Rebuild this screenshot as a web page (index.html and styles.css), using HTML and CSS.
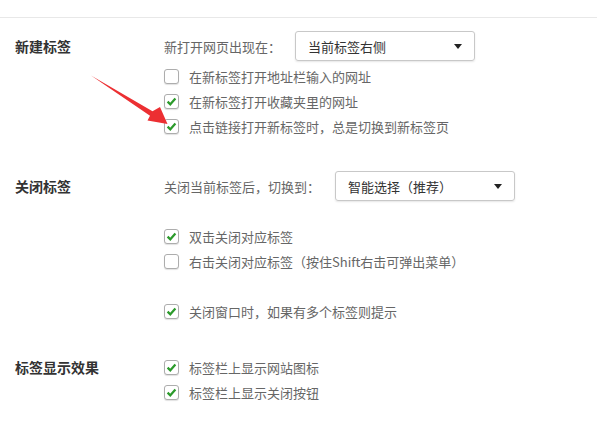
FILE: index.html
```html
<!DOCTYPE html>
<html lang="zh-CN">
<head>
    <meta charset="UTF-8">
    <title>标签设置</title>
    <link rel="stylesheet" href="styles.css">
</head>
<body>
    <div class="settings">
        <div class="section first">
            <div class="label label-select">新建标签</div>
            <div class="options">
                <div class="row row-select">
                    <span class="text">新打开网页出现在：</span>
                    <div class="select sel-new">当前标签右侧<i class="caret"></i></div>
                </div>
                <div class="row"><span class="check"></span><span class="text">在新标签打开地址栏输入的网址</span></div>
                <div class="row"><span class="check on"></span><span class="text">在新标签打开收藏夹里的网址</span></div>
                <div class="row"><span class="check on"></span><span class="text">点击链接打开新标签时，总是切换到新标签页</span></div>
            </div>
        </div>

        <div class="section second">
            <div class="label label-select">关闭标签</div>
            <div class="options">
                <div class="row row-select">
                    <span class="text">关闭当前标签后，切换到：</span>
                    <div class="select sel-close">智能选择（推荐）<i class="caret"></i></div>
                </div>
                <div class="spacer"></div>
                <div class="row"><span class="check on"></span><span class="text">双击关闭对应标签</span></div>
                <div class="row"><span class="check"></span><span class="text">右击关闭对应标签（按住Shift右击可弹出菜单）</span></div>
                <div class="row"></div>
                <div class="row"><span class="check on"></span><span class="text">关闭窗口时，如果有多个标签则提示</span></div>
            </div>
        </div>

        <div class="section third">
            <div class="label">标签显示效果</div>
            <div class="options">
                <div class="row"><span class="check on"></span><span class="text">标签栏上显示网站图标</span></div>
                <div class="row"><span class="check on"></span><span class="text">标签栏上显示关闭按钮</span></div>
            </div>
        </div>
    </div>

    <!-- 红色箭头标注 -->
    <svg class="arrow" width="597" height="424" viewBox="0 0 597 424">
        <polygon points="91,75.5 152.5,111.3 160,107 167.5,124 147.5,120.5 150,115.8" fill="#ec2f32"/>
    </svg>

    <script>
        // 勾选框里画对号
        document.querySelectorAll(".check.on").forEach((v) => {
            v.innerHTML = '<svg width="15" height="15" viewBox="0 0 15 15"><path d="M3.6 7.6 L6.3 10.3 L11.4 4.6" fill="none" stroke="#2b9a2b" stroke-width="2.2"/></svg>';
        });
    </script>
</body>
</html>
```

FILE: styles.css
```css
body {
    margin: 0;
    background: #fff;
    font-family: "Microsoft YaHei", "Noto Sans CJK SC", sans-serif;
    font-size: 13px;
    color: #666;
}
.settings {
    margin-top: 17px;
    border-top: 1px solid #e8e8e8;
}
.section {
    display: flex;
}
.section.first {
    padding-top: 13px;
}
.section.second {
    padding-top: 32px;
}
.section.third {
    padding-top: 31px;
}
.label {
    width: 149px;
    padding-left: 15px;
    font-size: 14px;
    font-weight: bold;
    color: #333;
    line-height: 25px;
}
.label-select {
    line-height: 30px;
}
.options {
    flex: 1;
}
.row {
    height: 25px;
    display: flex;
    align-items: center;
}
.row-select {
    height: 30px;
    margin-bottom: 3px;
}
.spacer {
    height: 20px;
}
.text {
    white-space: nowrap;
}
.check {
    width: 13px;
    height: 13px;
    border: 1px solid #adadad;
    border-radius: 3px;
    margin-right: 10px;
    background: #fff;
    box-shadow: 0 1px 1px rgba(0, 0, 0, 0.12);
    position: relative;
}
.check svg {
    position: absolute;
    left: -1px;
    top: -1px;
}
.select {
    box-sizing: border-box;
    height: 30px;
    border: 1px solid #c8c8c8;
    border-radius: 3px;
    box-shadow: 0 1px 2px rgba(0, 0, 0, 0.1);
    padding: 0 12px;
    display: flex;
    align-items: center;
    justify-content: space-between;
    color: #333;
}
.sel-new {
    width: 180px;
    margin-left: 14px;
}
.sel-close {
    width: 180px;
    margin-left: 15px;
}
.caret {
    width: 0;
    height: 0;
    border-left: 4px solid transparent;
    border-right: 4px solid transparent;
    border-top: 5px solid #222;
}
.arrow {
    position: absolute;
    left: 0;
    top: 0;
    pointer-events: none;
}
```
